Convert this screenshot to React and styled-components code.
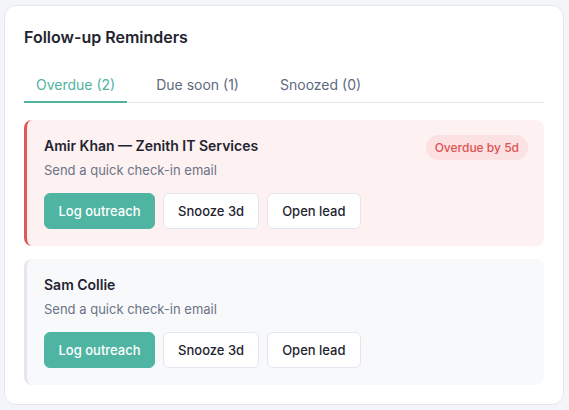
import React from "react";
import styled, { createGlobalStyle } from "styled-components";

const GlobalStyle = createGlobalStyle`
  * { box-sizing: border-box; }
  body {
    margin: 0;
    background: #f4f5f9;
    font-family: Inter, "Noto Sans", sans-serif;
    color: #1f2430;
  }
`;

const reminders = [
  {
    id: 1,
    name: "Amir Khan — Zenith IT Services",
    note: "Send a quick check-in email",
    overdue: "Overdue by 5d",
  },
  {
    id: 2,
    name: "Sam Collie",
    note: "Send a quick check-in email",
  },
];

const tabs = ["Overdue (2)", "Due soon (1)", "Snoozed (0)"];

const App = () => {
  return (
    <>
      <GlobalStyle />
      <Page>
        <Card>
          <Title>Follow-up Reminders</Title>
          <Tabs>
            {tabs.map((t, i) => (
              <Tab key={t} active={i === 0}>
                {t}
              </Tab>
            ))}
          </Tabs>
          <List>
            {reminders.map((r) => (
              <Item key={r.id} overdue={!!r.overdue}>
                <Top>
                  <Name>{r.name}</Name>
                  {r.overdue && <Badge>{r.overdue}</Badge>}
                </Top>
                <Note>{r.note}</Note>
                <Actions>
                  <Button primary>Log outreach</Button>
                  <Button>Snooze 3d</Button>
                  <Button>Open lead</Button>
                </Actions>
              </Item>
            ))}
          </List>
        </Card>
      </Page>
    </>
  );
};

export default App;

const Page = styled.div`
  padding: 5px 5px 5px 4px;
`;

const Card = styled.div`
  width: 560px;
  height: 400px;
  background: #fff;
  border: 1px solid #e4e7ef;
  border-radius: 12px;
  padding: 18px 19px 20px;
`;

const Title = styled.h2`
  margin: 0;
  font-size: 16px;
  line-height: 26px;
  font-weight: 600;
  color: #1f2430;
`;

const Tabs = styled.div`
  display: flex;
  gap: 17px;
  margin-top: 25px;
  border-bottom: 1px solid #e4e7ee;
`;

const Tab = styled.div`
  padding: 0 12px 6px;
  font-size: 14px;
  line-height: 20px;
  color: ${(p) => (p.active ? "#4fb3a0" : "#5f6a7e")};
  border-bottom: 2px solid ${(p) => (p.active ? "#4fb3a0" : "transparent")};
  margin-bottom: -1px;
`;

const List = styled.div`
  display: flex;
  flex-direction: column;
  gap: 13px;
  margin-top: 17px;
`;

const Item = styled.div`
  background: ${(p) => (p.overdue ? "#fdf1f1" : "#f8f9fb")};
  border-left: 3px solid ${(p) => (p.overdue ? "#e05656" : "#e4e7ee")};
  border-radius: 8px;
  padding: 16px 16px 17px 17px;
`;

const Top = styled.div`
  display: flex;
  justify-content: space-between;
  align-items: center;
  height: 20px;
`;

const Name = styled.div`
  font-size: 14px;
  line-height: 20px;
  font-weight: 600;
  color: #1f2430;
`;

const Badge = styled.span`
  background: #fbe1e1;
  color: #e05252;
  font-size: 12px;
  font-weight: 500;
  line-height: 17px;
  padding: 4px 9px;
  margin-top: 3px;
  border-radius: 999px;
`;

const Note = styled.div`
  margin-top: 5px;
  font-size: 13px;
  line-height: 18px;
  color: #6b7487;
`;

const Actions = styled.div`
  display: flex;
  gap: 8px;
  margin-top: 14px;
`;

const Button = styled.button`
  height: 36px;
  padding: 0 ${(p) => (p.primary ? "13.5px" : "14px")};
  border-radius: 6px;
  font-family: Inter, "Noto Sans", sans-serif;
  font-size: 13px;
  font-weight: 500;
  cursor: pointer;
  background: ${(p) => (p.primary ? "#4fb5a2" : "#fff")};
  color: ${(p) => (p.primary ? "#fff" : "#1f2430")};
  border: 1px solid ${(p) => (p.primary ? "#4fb5a2" : "#e3e6ee")};
`;
